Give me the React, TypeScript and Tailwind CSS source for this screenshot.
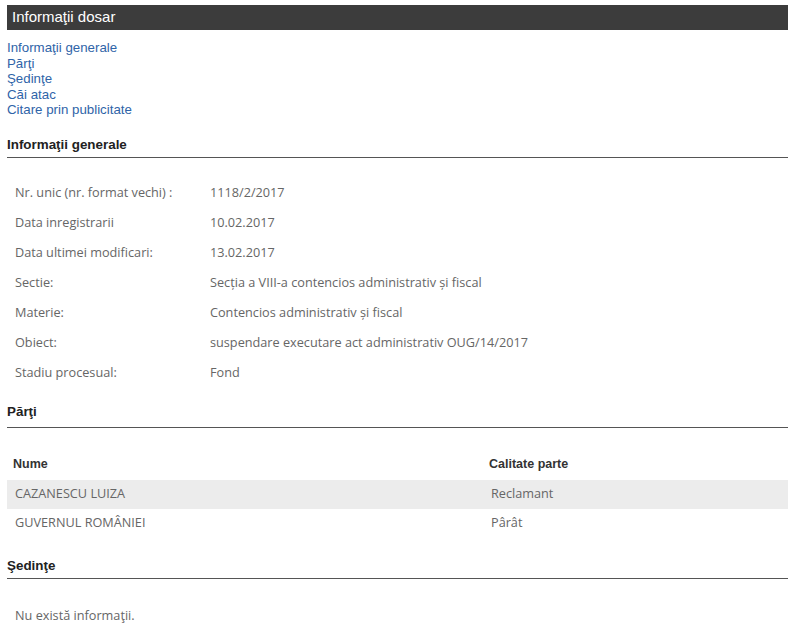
import React from 'react';

interface InfoRow {
  label: string;
  value: string;
}

interface Party {
  name: string;
  role: string;
}

const links = ['Informaţii generale', 'Părţi', 'Şedinţe', 'Căi atac', 'Citare prin publicitate'];

const info: InfoRow[] = [
  { label: 'Nr. unic (nr. format vechi) :', value: '1118/2/2017' },
  { label: 'Data inregistrarii', value: '10.02.2017' },
  { label: 'Data ultimei modificari:', value: '13.02.2017' },
  { label: 'Sectie:', value: 'Secția a VIII-a contencios administrativ și fiscal' },
  { label: 'Materie:', value: 'Contencios administrativ și fiscal' },
  { label: 'Obiect:', value: 'suspendare executare act administrativ OUG/14/2017' },
  { label: 'Stadiu procesual:', value: 'Fond' },
];

const parties: Party[] = [
  { name: 'CAZANESCU LUIZA', role: 'Reclamant' },
  { name: 'GUVERNUL ROMÂNIEI', role: 'Pârât' },
];

const sans = "font-['Liberation_Sans',Arial,sans-serif]";
const body = "font-['Open_Sans','DejaVu_Sans',sans-serif]";

const App: React.FC = () => {
  return (
    <div className="min-h-[644px] w-[800px] bg-white px-[7px] pt-[5px]">
      <div className="w-[781px]">
        {/* page title bar */}
        <div className={`flex h-[25px] items-center bg-[#3c3c3c] pl-[5px] text-[15px] text-white ${sans}`}>
          Informaţii dosar
        </div>

        {/* quick links */}
        <nav className={`mt-[10px] flex flex-col text-[13.3px] leading-[15.5px] ${sans}`}>
          {links.map(l => (
            <a key={l} href="#" className="w-fit text-[#2f64a8] hover:underline">
              {l}
            </a>
          ))}
        </nav>

        {/* Informatii generale */}
        <h2 className={`mt-[19px] border-b border-[#555] pb-[4px] text-[13.4px] font-bold leading-[16px] text-[#222] ${sans}`}>
          Informaţii generale
        </h2>
        <div className={`mt-[20px] text-[12.7px] text-[#666] ${body}`}>
          {info.map(r => (
            <div key={r.label} className="flex h-[30px] items-center">
              <div className="w-[203px] pl-[8px]">{r.label}</div>
              <div>{r.value}</div>
            </div>
          ))}
        </div>

        {/* Parti */}
        <h2 className={`mt-[16px] border-b border-[#555] pb-[7px] text-[13.4px] font-bold leading-[16px] text-[#222] ${sans}`}>
          Părţi
        </h2>
        <div className="mt-[23px]">
          <div className={`flex h-[29px] items-start pt-[5px] text-[12.5px] font-bold leading-[16px] text-[#333] ${sans}`}>
            <div className="w-[482px] pl-[6px]">Nume</div>
            <div>Calitate parte</div>
          </div>
          {parties.map((p, i) => (
            <div
              key={p.name}
              className={`flex h-[29px] items-center text-[12.7px] text-[#666] ${body} ${i % 2 === 0 ? 'bg-[#ececec]' : ''}`}
            >
              <div className="w-[484px] pl-[8px]">{p.name}</div>
              <div>{p.role}</div>
            </div>
          ))}
        </div>

        {/* Sedinte */}
        <h2 className={`mt-[20px] border-b border-[#555] pb-[4px] text-[13.4px] font-bold leading-[16px] text-[#222] ${sans}`}>
          Şedinţe
        </h2>
        <p className={`mt-[28px] pl-[8px] text-[12.7px] leading-[16px] text-[#666] ${body}`}>Nu există informaţii.</p>
      </div>
    </div>
  );
};

export default App;
